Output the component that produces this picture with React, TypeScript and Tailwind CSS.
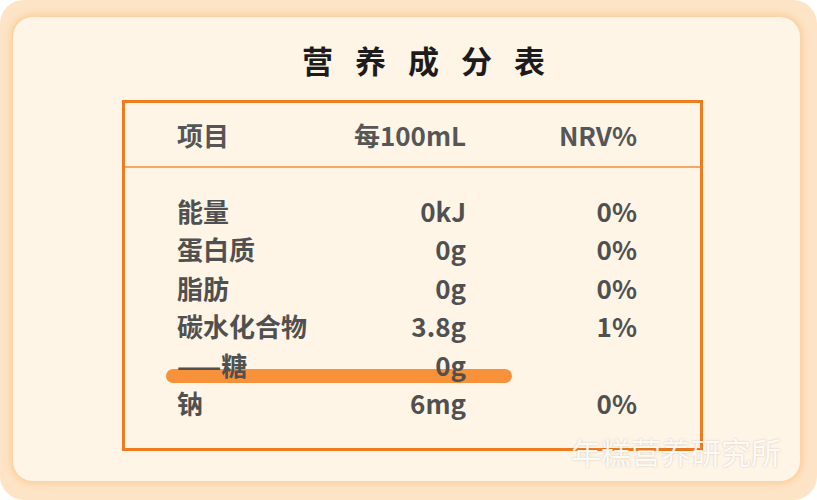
import React from 'react';

interface Row {
    name: string;
    amount: string;
    nrv: string;
}

const rows: Row[] = [
    { name: '能量', amount: '0kJ', nrv: '0%' },
    { name: '蛋白质', amount: '0g', nrv: '0%' },
    { name: '脂肪', amount: '0g', nrv: '0%' },
    { name: '碳水化合物', amount: '3.8g', nrv: '1%' },
    { name: '——糖', amount: '0g', nrv: '' },
    { name: '钠', amount: '6mg', nrv: '0%' },
];

const font = { fontFamily: '"Noto Sans CJK SC", "Noto Sans", sans-serif' };

export default function App() {
    return (
        <div className="w-[817px] h-[500px] bg-white" style={font}>
            {/* peach frame */}
            <div className="w-full h-full rounded-[24px] bg-[#fde4c6] pl-[13px] pr-[17px] pt-[17px] pb-[19px]">
                <div className="relative w-full h-full rounded-[20px] bg-[#fef5e7] shadow-[0_0_6px_3px_#fbcf9e] flex flex-col">
                    {/* title */}
                    <h1 className="pt-[24px] pl-[289px] text-[31px] leading-[38px] font-bold tracking-[22px] text-[#1c1c1c]">
                        营养成分表
                    </h1>

                    {/* table */}
                    <div className="relative ml-[109px] mt-[21px] w-[581px] h-[351px] border-[3px] border-[#ef7a1f]">
                        <div className="absolute left-[41px] top-[266px] w-[346px] h-[14px] rounded-full bg-[#f7923b]" />

                        <div className="relative flex items-center h-[63px] pl-[52px] text-[26px] font-semibold text-[#565656] whitespace-nowrap">
                            <span className="w-[200px] shrink-0">项目</span>
                            <span className="w-[89px] shrink-0 flex justify-end">每100mL</span>
                            <span className="w-[171px] shrink-0 flex justify-end">NRV%</span>
                        </div>
                        <div className="h-[2px] bg-[#f6a862]" />

                        <div className="relative pt-[23px] pl-[52px] text-[26px] font-semibold text-[#505050] whitespace-nowrap">
                            {rows.map((r) => (
                                <div key={r.name} className="flex h-[38.5px] items-center">
                                    <span className="w-[200px] shrink-0">{r.name}</span>
                                    <span className="w-[89px] shrink-0 flex justify-end">{r.amount}</span>
                                    <span className="w-[171px] shrink-0 flex justify-end">{r.nrv}</span>
                                </div>
                            ))}
                        </div>
                    </div>

                    {/* watermark */}
                    <span className="absolute left-[558px] top-[417px] text-[30px] leading-[34px] text-white/90 [text-shadow:0_0_2px_rgba(120,90,60,0.35)]">
                        年糕营养研究所
                    </span>
                </div>
            </div>
        </div>
    );
}
